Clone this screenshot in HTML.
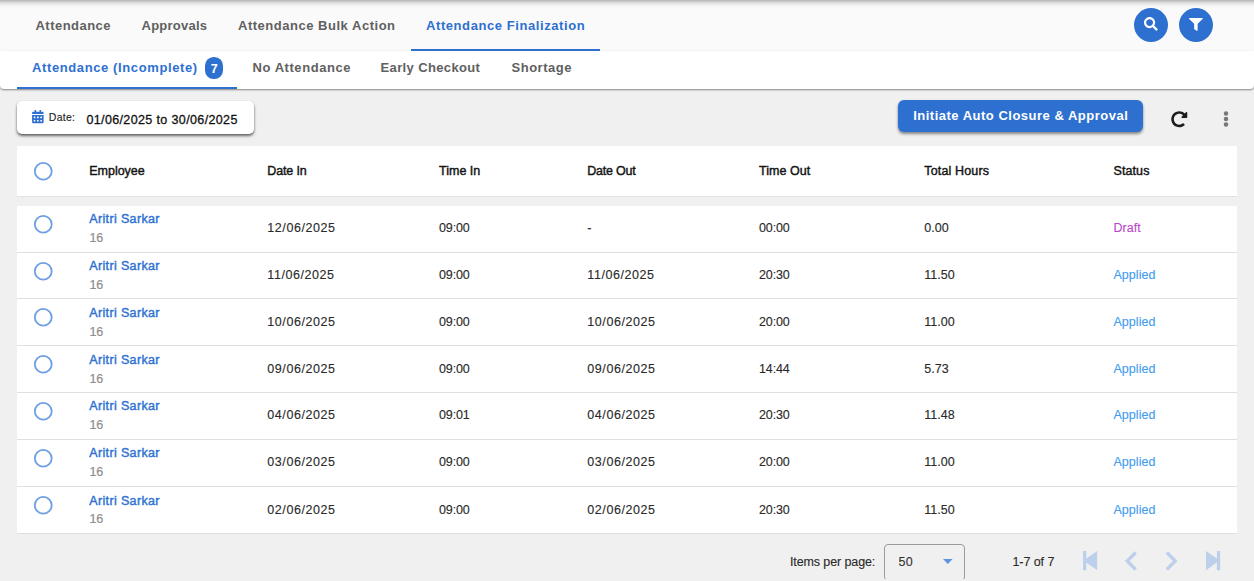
<!DOCTYPE html>
<html><head><meta charset="utf-8"><title>Attendance Finalization</title>
<style>
*{box-sizing:border-box;margin:0;padding:0}
html,body{width:1254px;height:581px;overflow:hidden;background:#f0f0f0;font-family:"Liberation Sans",sans-serif;color:#212121}
.t{position:absolute;white-space:nowrap;line-height:1}
.t{-webkit-text-stroke:.12px currentColor}
.t.m{-webkit-text-stroke:.42px currentColor}
.t[style*="font-weight:bold"]{-webkit-text-stroke:0}
#top{position:absolute;left:0;top:0;width:1254px;height:51px;background:#fafafa}
#topshadow{position:absolute;left:0;top:0;width:1254px;height:9px;background:linear-gradient(#bcbcbc .5px,#cbcbcb 1.5px,#d9d9d9 2.5px,#e4e4e4 3.5px,#ececec 4.5px,#f2f2f2 5.5px,#f6f6f6 6.5px,#f9f9f9 7.5px,#fafafa 8.5px)}
#sub{position:absolute;left:0;top:51px;width:1254px;height:38px;background:#fff;border-radius:0 0 4px 4px;box-shadow:0 1px 2px rgba(0,0,0,.45)}
.ul{position:absolute;height:2px;background:#2d70d0}
.circ{position:absolute;width:34px;height:34px;border-radius:50%;background:#2d70d0}
#badge{position:absolute;left:205.4px;top:57px;width:17.2px;height:21.6px;border-radius:8.6px;background:#2d70d0}
#datebox{position:absolute;left:17px;top:101px;width:236.5px;height:32.5px;background:#fff;border-radius:5px;box-shadow:0 2px 3px rgba(0,0,0,.55),0 1px 2px rgba(0,0,0,.12)}
#btn{position:absolute;left:898px;top:100px;width:244.5px;height:31.5px;background:#2d70d0;border-radius:6px;box-shadow:0 2px 3px rgba(0,0,0,.45)}
#thead{position:absolute;left:17px;top:146px;width:1220px;height:51px;background:#fff;border-bottom:1px solid #e2e2e2}
.row{position:absolute;left:17px;width:1220px;background:#fff;border-bottom:1px solid #dfdfdf}
.cb{position:absolute;width:18.5px;height:18.5px}
#selc{position:absolute;left:880px;top:540px;width:90px;height:39px;overflow:hidden}
#sel{position:absolute;left:4px;top:4px;width:81px;height:37px;border:1px solid #9a9a9a;border-radius:4px}
svg{position:absolute;overflow:visible}
</style></head><body>
<div id="top"></div><div id="topshadow"></div>
<div id="sub"></div>
<div class="t" style="left:35.50px;top:19.40px;font-size:13px;letter-spacing:0.47px;color:#606060;font-weight:bold;">Attendance</div>
<div class="t" style="left:141.50px;top:19.40px;font-size:13px;letter-spacing:0.24px;color:#606060;font-weight:bold;">Approvals</div>
<div class="t" style="left:238.00px;top:19.40px;font-size:13px;letter-spacing:0.52px;color:#606060;font-weight:bold;">Attendance Bulk Action</div>
<div class="t" style="left:426.00px;top:19.40px;font-size:13px;letter-spacing:0.58px;color:#2d70d0;font-weight:bold;">Attendance Finalization</div>
<div class="ul" style="left:410.5px;top:49px;width:189px"></div>
<div class="t" style="left:32.00px;top:61.20px;font-size:13px;letter-spacing:0.61px;color:#2d70d0;font-weight:bold;">Attendance (Incomplete)</div>
<div class="t" style="left:252.50px;top:61.20px;font-size:13px;letter-spacing:0.56px;color:#606060;font-weight:bold;">No Attendance</div>
<div class="t" style="left:380.50px;top:61.20px;font-size:13px;letter-spacing:0.37px;color:#606060;font-weight:bold;">Early Checkout</div>
<div class="t" style="left:511.50px;top:61.20px;font-size:13px;letter-spacing:0.52px;color:#606060;font-weight:bold;">Shortage</div>
<div class="ul" style="left:17px;top:87px;width:220px"></div>
<div id="badge"></div>
<div class="t" style="left:210.80px;top:62.62px;font-size:12.5px;letter-spacing:0px;color:#fff;font-weight:bold;">7</div>
<div class="circ" style="left:1134px;top:8px"></div><div class="circ" style="left:1179px;top:8px"></div>
<svg style="left:1143.9px;top:17.3px" width="13.8" height="13.8" viewBox="0 0 512 512"><path fill="#fff" d="M505 442.700L405.300 343c-4.500-4.500-10.600-7-17-7H372c27.600-35.300 44-79.700 44-128C416 93.100 322.900 0 208 0S0 93.100 0 208s93.100 208 208 208c48.300 0 92.700-16.400 128-44v16.300c0 6.400 2.500 12.500 7 17l99.700 99.700c9.400 9.400 24.600 9.400 33.900 0l28.300-28.300c9.400-9.400 9.400-24.600.1-34zM208 336c-70.700 0-128-57.200-128-128 0-70.700 57.200-128 128-128 70.700 0 128 57.200 128 128 0 70.700-57.200 128-128 128z"/></svg>
<svg style="left:1189.2px;top:18px" width="13.8" height="12.8" viewBox="0 0 512 512" preserveAspectRatio="none"><path fill="#fff" d="M487.976 0H24.028C2.710 0-8.047 25.866 7.058 40.971L192 225.941V432c0 7.831 3.821 15.170 10.237 19.662l80 55.980C298.020 518.690 320 507.493 320 487.980V225.941l184.947-184.970C520.021 25.896 509.338 0 487.976 0z"/></svg>
<div id="datebox"></div>
<svg style="left:32px;top:109.7px" width="11.7" height="13.2" viewBox="0 0 448 512"><path fill="#2d70d0" d="M0 464c0 26.500 21.500 48 48 48h352c26.500 0 48-21.500 48-48V192H0v272zm320-196c0-6.600 5.400-12 12-12h40c6.600 0 12 5.400 12 12v40c0 6.600-5.400 12-12 12h-40c-6.600 0-12-5.400-12-12v-40zm0 128c0-6.600 5.400-12 12-12h40c6.600 0 12 5.400 12 12v40c0 6.600-5.400 12-12 12h-40c-6.600 0-12-5.400-12-12v-40zM192 268c0-6.600 5.400-12 12-12h40c6.600 0 12 5.400 12 12v40c0 6.600-5.400 12-12 12h-40c-6.600 0-12-5.400-12-12v-40zm0 128c0-6.600 5.400-12 12-12h40c6.600 0 12 5.400 12 12v40c0 6.600-5.400 12-12 12h-40c-6.600 0-12-5.400-12-12v-40zM64 268c0-6.600 5.400-12 12-12h40c6.600 0 12 5.400 12 12v40c0 6.600-5.400 12-12 12H76c-6.600 0-12-5.400-12-12v-40zm0 128c0-6.600 5.400-12 12-12h40c6.600 0 12 5.400 12 12v40c0 6.600-5.400 12-12 12H76c-6.600 0-12-5.400-12-12v-40zM400 64h-48V16c0-8.800-7.200-16-16-16h-32c-8.800 0-16 7.200-16 16v48H160V16c0-8.800-7.200-16-16-16h-32c-8.800 0-16 7.200-16 16v48H48C21.500 64 0 85.500 0 112v48h448v-48c0-26.500-21.500-48-48-48z"/></svg>
<div class="t" style="left:48.80px;top:111.81px;font-size:10.5px;letter-spacing:0.27px;color:#222;font-weight:normal;">Date:</div>
<div class="t" style="left:86.40px;top:114.42px;font-size:12.5px;letter-spacing:0.37px;color:#111;font-weight:normal;-webkit-text-stroke:.3px #111">01/06/2025 to 30/06/2025</div>
<div id="btn"></div>
<div class="t" style="left:913.20px;top:109.30px;font-size:13px;letter-spacing:0.5px;color:#fff;font-weight:bold;">Initiate Auto Closure &amp; Approval</div>
<svg style="left:1170.9px;top:110.7px" width="16.5" height="16.5" viewBox="0 0 512 512"><path fill="#1c1c1c" d="M256.455 8c66.269.119 126.437 26.233 170.859 68.685l35.715-35.715C478.149 25.851 504 36.559 504 57.941V192c0 13.255-10.745 24-24 24H345.941c-21.382 0-32.090-25.851-16.971-40.971l41.750-41.750c-30.864-28.899-70.801-44.907-113.230-45.273-92.398-.798-170.283 73.977-169.484 169.442C88.764 348.009 162.184 424 256 424c41.127 0 79.997-14.678 110.629-41.556 4.743-4.161 11.906-3.908 16.368.553l39.662 39.662c4.872 4.872 4.631 12.815-.482 17.433C378.202 479.813 319.926 504 256 504 119.034 504 8.001 392.967 8 256.002 7.999 119.193 119.646 7.755 256.455 8z"/></svg>
<svg style="left:1223px;top:110px" width="6" height="18" viewBox="0 0 6 18"><circle cx="3" cy="3.4" r="2.25" fill="#777"/><circle cx="3" cy="9" r="2.25" fill="#777"/><circle cx="3" cy="14.6" r="2.25" fill="#777"/></svg>
<div id="thead"></div>
<svg style="left:33.70px;top:161.75px" width="18.5" height="18.5" viewBox="0 0 18.5 18.5"><circle cx="9.25" cy="9.25" r="8.45" fill="none" stroke="#6e9ee3" stroke-width="1.8"/></svg>
<div class="t m" style="left:89.30px;top:165.42px;font-size:12.5px;letter-spacing:-0.03px;color:#141414;font-weight:normal">Employee</div>
<div class="t m" style="left:267.30px;top:165.42px;font-size:12.5px;letter-spacing:-0.14px;color:#141414;font-weight:normal">Date In</div>
<div class="t m" style="left:439.00px;top:165.42px;font-size:12.5px;letter-spacing:0.01px;color:#141414;font-weight:normal">Time In</div>
<div class="t m" style="left:587.30px;top:165.42px;font-size:12.5px;letter-spacing:-0.22px;color:#141414;font-weight:normal">Date Out</div>
<div class="t m" style="left:759.00px;top:165.42px;font-size:12.5px;letter-spacing:0.04px;color:#141414;font-weight:normal">Time Out</div>
<div class="t m" style="left:924.30px;top:165.42px;font-size:12.5px;letter-spacing:0.15px;color:#141414;font-weight:normal">Total Hours</div>
<div class="t m" style="left:1113.50px;top:165.42px;font-size:12.5px;letter-spacing:0.09px;color:#141414;font-weight:normal">Status</div>
<div class="row" style="top:206px;height:47px"></div>
<svg style="left:33.70px;top:215.00px" width="18.5" height="18.5" viewBox="0 0 18.5 18.5"><circle cx="9.25" cy="9.25" r="8.45" fill="none" stroke="#6e9ee3" stroke-width="1.8"/></svg>
<div class="t m" style="left:89.30px;top:213.42px;font-size:12.5px;letter-spacing:0.35px;color:#2f72d2;font-weight:normal">Aritri Sarkar</div>
<div class="t" style="left:89.50px;top:232.42px;font-size:12.5px;letter-spacing:-0.1px;color:#8f8f8f;font-weight:normal;-webkit-text-stroke:.22px #8f8f8f">16</div>
<div class="t" style="left:267.30px;top:222.42px;font-size:12.5px;letter-spacing:0.57px;color:#2a2a2a;font-weight:normal;">12/06/2025</div>
<div class="t" style="left:439.00px;top:222.42px;font-size:12.5px;letter-spacing:-0.13px;color:#2a2a2a;font-weight:normal;">09:00</div>
<div class="t" style="left:587.30px;top:222.42px;font-size:12.5px;letter-spacing:0.57px;color:#2a2a2a;font-weight:normal;">-</div>
<div class="t" style="left:759.00px;top:222.42px;font-size:12.5px;letter-spacing:-0.13px;color:#2a2a2a;font-weight:normal;">00:00</div>
<div class="t" style="left:924.30px;top:222.42px;font-size:12.5px;letter-spacing:0.0px;color:#2a2a2a;font-weight:normal;">0.00</div>
<div class="t" style="left:1113.50px;top:222.42px;font-size:12.5px;letter-spacing:0.03px;color:#b84ac6;font-weight:normal;">Draft</div>
<div class="row" style="top:253px;height:46px"></div>
<svg style="left:33.70px;top:261.70px" width="18.5" height="18.5" viewBox="0 0 18.5 18.5"><circle cx="9.25" cy="9.25" r="8.45" fill="none" stroke="#6e9ee3" stroke-width="1.8"/></svg>
<div class="t m" style="left:89.30px;top:260.42px;font-size:12.5px;letter-spacing:0.35px;color:#2f72d2;font-weight:normal">Aritri Sarkar</div>
<div class="t" style="left:89.50px;top:279.42px;font-size:12.5px;letter-spacing:-0.1px;color:#8f8f8f;font-weight:normal;-webkit-text-stroke:.22px #8f8f8f">16</div>
<div class="t" style="left:267.30px;top:269.42px;font-size:12.5px;letter-spacing:0.57px;color:#2a2a2a;font-weight:normal;">11/06/2025</div>
<div class="t" style="left:439.00px;top:269.42px;font-size:12.5px;letter-spacing:-0.13px;color:#2a2a2a;font-weight:normal;">09:00</div>
<div class="t" style="left:587.30px;top:269.42px;font-size:12.5px;letter-spacing:0.57px;color:#2a2a2a;font-weight:normal;">11/06/2025</div>
<div class="t" style="left:759.00px;top:269.42px;font-size:12.5px;letter-spacing:-0.13px;color:#2a2a2a;font-weight:normal;">20:30</div>
<div class="t" style="left:924.30px;top:269.42px;font-size:12.5px;letter-spacing:0.0px;color:#2a2a2a;font-weight:normal;">11.50</div>
<div class="t" style="left:1113.50px;top:269.42px;font-size:12.5px;letter-spacing:0.03px;color:#3f9cf0;font-weight:normal;">Applied</div>
<div class="row" style="top:299px;height:47px"></div>
<svg style="left:33.70px;top:308.40px" width="18.5" height="18.5" viewBox="0 0 18.5 18.5"><circle cx="9.25" cy="9.25" r="8.45" fill="none" stroke="#6e9ee3" stroke-width="1.8"/></svg>
<div class="t m" style="left:89.30px;top:307.42px;font-size:12.5px;letter-spacing:0.35px;color:#2f72d2;font-weight:normal">Aritri Sarkar</div>
<div class="t" style="left:89.50px;top:326.42px;font-size:12.5px;letter-spacing:-0.1px;color:#8f8f8f;font-weight:normal;-webkit-text-stroke:.22px #8f8f8f">16</div>
<div class="t" style="left:267.30px;top:316.42px;font-size:12.5px;letter-spacing:0.57px;color:#2a2a2a;font-weight:normal;">10/06/2025</div>
<div class="t" style="left:439.00px;top:316.42px;font-size:12.5px;letter-spacing:-0.13px;color:#2a2a2a;font-weight:normal;">09:00</div>
<div class="t" style="left:587.30px;top:316.42px;font-size:12.5px;letter-spacing:0.57px;color:#2a2a2a;font-weight:normal;">10/06/2025</div>
<div class="t" style="left:759.00px;top:316.42px;font-size:12.5px;letter-spacing:-0.13px;color:#2a2a2a;font-weight:normal;">20:00</div>
<div class="t" style="left:924.30px;top:316.42px;font-size:12.5px;letter-spacing:0.0px;color:#2a2a2a;font-weight:normal;">11.00</div>
<div class="t" style="left:1113.50px;top:316.42px;font-size:12.5px;letter-spacing:0.03px;color:#3f9cf0;font-weight:normal;">Applied</div>
<div class="row" style="top:346px;height:47px"></div>
<svg style="left:33.70px;top:355.10px" width="18.5" height="18.5" viewBox="0 0 18.5 18.5"><circle cx="9.25" cy="9.25" r="8.45" fill="none" stroke="#6e9ee3" stroke-width="1.8"/></svg>
<div class="t m" style="left:89.30px;top:354.42px;font-size:12.5px;letter-spacing:0.35px;color:#2f72d2;font-weight:normal">Aritri Sarkar</div>
<div class="t" style="left:89.50px;top:373.42px;font-size:12.5px;letter-spacing:-0.1px;color:#8f8f8f;font-weight:normal;-webkit-text-stroke:.22px #8f8f8f">16</div>
<div class="t" style="left:267.30px;top:363.42px;font-size:12.5px;letter-spacing:0.57px;color:#2a2a2a;font-weight:normal;">09/06/2025</div>
<div class="t" style="left:439.00px;top:363.42px;font-size:12.5px;letter-spacing:-0.13px;color:#2a2a2a;font-weight:normal;">09:00</div>
<div class="t" style="left:587.30px;top:363.42px;font-size:12.5px;letter-spacing:0.57px;color:#2a2a2a;font-weight:normal;">09/06/2025</div>
<div class="t" style="left:759.00px;top:363.42px;font-size:12.5px;letter-spacing:-0.13px;color:#2a2a2a;font-weight:normal;">14:44</div>
<div class="t" style="left:924.30px;top:363.42px;font-size:12.5px;letter-spacing:0.0px;color:#2a2a2a;font-weight:normal;">5.73</div>
<div class="t" style="left:1113.50px;top:363.42px;font-size:12.5px;letter-spacing:0.03px;color:#3f9cf0;font-weight:normal;">Applied</div>
<div class="row" style="top:393px;height:47px"></div>
<svg style="left:33.70px;top:402.30px" width="18.5" height="18.5" viewBox="0 0 18.5 18.5"><circle cx="9.25" cy="9.25" r="8.45" fill="none" stroke="#6e9ee3" stroke-width="1.8"/></svg>
<div class="t m" style="left:89.30px;top:400.42px;font-size:12.5px;letter-spacing:0.35px;color:#2f72d2;font-weight:normal">Aritri Sarkar</div>
<div class="t" style="left:89.50px;top:419.42px;font-size:12.5px;letter-spacing:-0.1px;color:#8f8f8f;font-weight:normal;-webkit-text-stroke:.22px #8f8f8f">16</div>
<div class="t" style="left:267.30px;top:409.42px;font-size:12.5px;letter-spacing:0.57px;color:#2a2a2a;font-weight:normal;">04/06/2025</div>
<div class="t" style="left:439.00px;top:409.42px;font-size:12.5px;letter-spacing:-0.13px;color:#2a2a2a;font-weight:normal;">09:01</div>
<div class="t" style="left:587.30px;top:409.42px;font-size:12.5px;letter-spacing:0.57px;color:#2a2a2a;font-weight:normal;">04/06/2025</div>
<div class="t" style="left:759.00px;top:409.42px;font-size:12.5px;letter-spacing:-0.13px;color:#2a2a2a;font-weight:normal;">20:30</div>
<div class="t" style="left:924.30px;top:409.42px;font-size:12.5px;letter-spacing:0.0px;color:#2a2a2a;font-weight:normal;">11.48</div>
<div class="t" style="left:1113.50px;top:409.42px;font-size:12.5px;letter-spacing:0.03px;color:#3f9cf0;font-weight:normal;">Applied</div>
<div class="row" style="top:440px;height:47px"></div>
<svg style="left:33.70px;top:449.20px" width="18.5" height="18.5" viewBox="0 0 18.5 18.5"><circle cx="9.25" cy="9.25" r="8.45" fill="none" stroke="#6e9ee3" stroke-width="1.8"/></svg>
<div class="t m" style="left:89.30px;top:447.42px;font-size:12.5px;letter-spacing:0.35px;color:#2f72d2;font-weight:normal">Aritri Sarkar</div>
<div class="t" style="left:89.50px;top:466.42px;font-size:12.5px;letter-spacing:-0.1px;color:#8f8f8f;font-weight:normal;-webkit-text-stroke:.22px #8f8f8f">16</div>
<div class="t" style="left:267.30px;top:456.42px;font-size:12.5px;letter-spacing:0.57px;color:#2a2a2a;font-weight:normal;">03/06/2025</div>
<div class="t" style="left:439.00px;top:456.42px;font-size:12.5px;letter-spacing:-0.13px;color:#2a2a2a;font-weight:normal;">09:00</div>
<div class="t" style="left:587.30px;top:456.42px;font-size:12.5px;letter-spacing:0.57px;color:#2a2a2a;font-weight:normal;">03/06/2025</div>
<div class="t" style="left:759.00px;top:456.42px;font-size:12.5px;letter-spacing:-0.13px;color:#2a2a2a;font-weight:normal;">20:00</div>
<div class="t" style="left:924.30px;top:456.42px;font-size:12.5px;letter-spacing:0.0px;color:#2a2a2a;font-weight:normal;">11.00</div>
<div class="t" style="left:1113.50px;top:456.42px;font-size:12.5px;letter-spacing:0.03px;color:#3f9cf0;font-weight:normal;">Applied</div>
<div class="row" style="top:487px;height:47px"></div>
<svg style="left:33.70px;top:496.30px" width="18.5" height="18.5" viewBox="0 0 18.5 18.5"><circle cx="9.25" cy="9.25" r="8.45" fill="none" stroke="#6e9ee3" stroke-width="1.8"/></svg>
<div class="t m" style="left:89.30px;top:495.42px;font-size:12.5px;letter-spacing:0.35px;color:#2f72d2;font-weight:normal">Aritri Sarkar</div>
<div class="t" style="left:89.50px;top:513.42px;font-size:12.5px;letter-spacing:-0.1px;color:#8f8f8f;font-weight:normal;-webkit-text-stroke:.22px #8f8f8f">16</div>
<div class="t" style="left:267.30px;top:504.42px;font-size:12.5px;letter-spacing:0.57px;color:#2a2a2a;font-weight:normal;">02/06/2025</div>
<div class="t" style="left:439.00px;top:504.42px;font-size:12.5px;letter-spacing:-0.13px;color:#2a2a2a;font-weight:normal;">09:00</div>
<div class="t" style="left:587.30px;top:504.42px;font-size:12.5px;letter-spacing:0.57px;color:#2a2a2a;font-weight:normal;">02/06/2025</div>
<div class="t" style="left:759.00px;top:504.42px;font-size:12.5px;letter-spacing:-0.13px;color:#2a2a2a;font-weight:normal;">20:30</div>
<div class="t" style="left:924.30px;top:504.42px;font-size:12.5px;letter-spacing:0.0px;color:#2a2a2a;font-weight:normal;">11.50</div>
<div class="t" style="left:1113.50px;top:504.42px;font-size:12.5px;letter-spacing:0.03px;color:#3f9cf0;font-weight:normal;">Applied</div>
<div class="t" style="left:790.00px;top:556.22px;font-size:12.5px;letter-spacing:-0.11px;color:#2a2a2a;font-weight:normal;">Items per page:</div>
<div id="selc"><div id="sel"></div></div>
<div class="t" style="left:898.50px;top:556.22px;font-size:12.5px;letter-spacing:0.39px;color:#333;font-weight:normal;">50</div>
<svg style="left:942.7px;top:559px" width="9.6" height="5" viewBox="0 0 9.6 5"><path d="M0 0H9.6L4.8 5Z" fill="#5e93e2"/></svg>
<div class="t" style="left:1012.50px;top:556.12px;font-size:12.5px;letter-spacing:-0.08px;color:#2a2a2a;font-weight:normal;">1-7 of 7</div>
<svg style="left:1082.7px;top:551px" width="14.2" height="19.2" viewBox="0 0 14.2 19.2"><path d="M0 0H3.3V7.6L14.2 0V19.2L3.3 11.6V19.2H0Z" fill="#bdd0eb"/></svg>
<svg style="left:1124.8px;top:551.6px" width="11.5" height="18" viewBox="0 0 11.5 18"><path d="M10.7 0.5L2.2 9L10.7 17.5" fill="none" stroke="#bdd0eb" stroke-width="3.3"/></svg>
<svg style="left:1166.3px;top:551.6px" width="11.5" height="18" viewBox="0 0 11.5 18"><path d="M0.8 0.5L9.3 9L0.8 17.5" fill="none" stroke="#bdd0eb" stroke-width="3.3"/></svg>
<svg style="left:1205.6px;top:551px" width="14.2" height="19.2" viewBox="0 0 14.2 19.2"><path d="M14.2 0H10.9V7.6L0 0V19.2L10.9 11.6V19.2H14.2Z" fill="#bdd0eb"/></svg>
</body></html>
